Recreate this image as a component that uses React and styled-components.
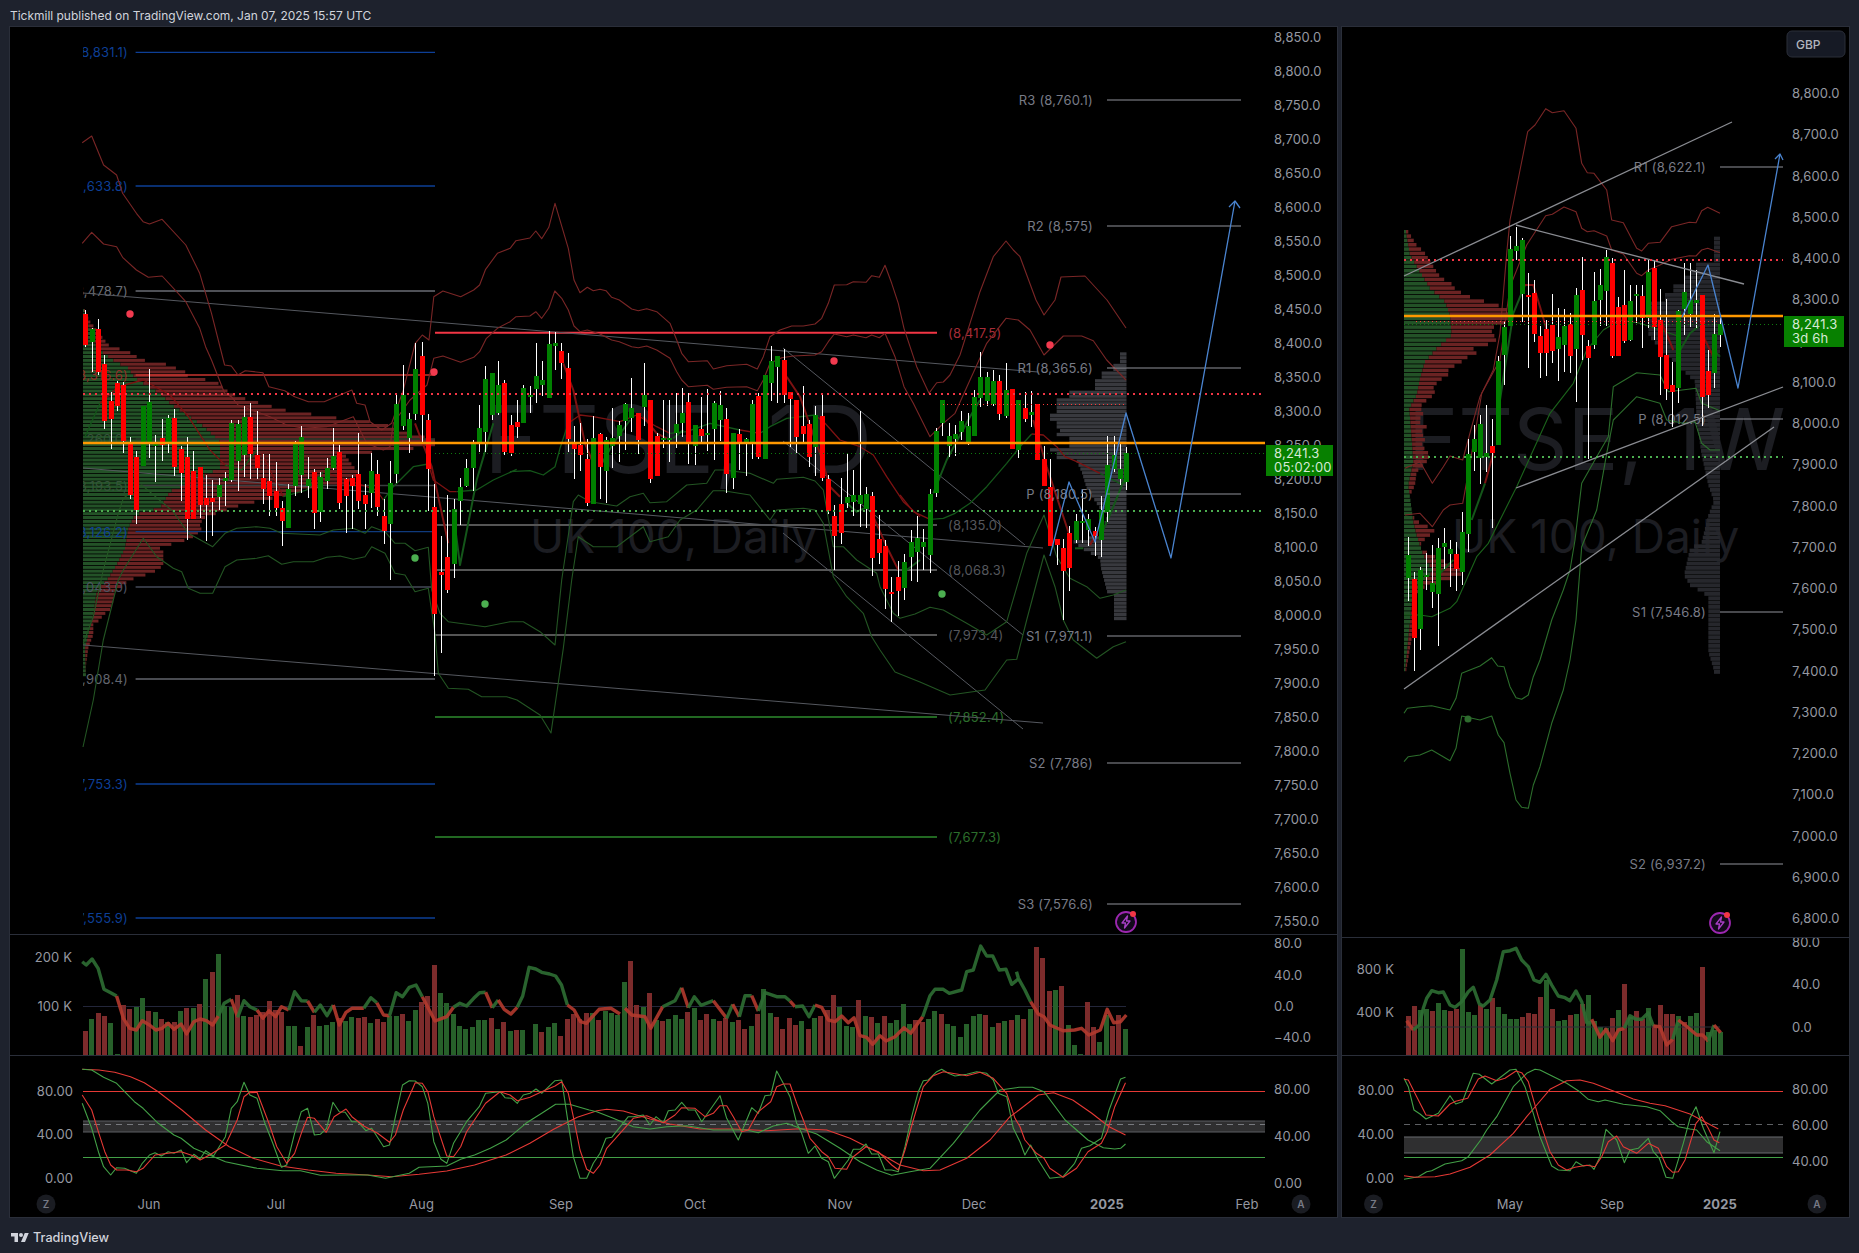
import React from 'react';
import styled, { createGlobalStyle } from 'styled-components';

const GlobalStyle = createGlobalStyle`
  html, body { margin: 0; padding: 0; background: #1e222d; }
  body { font-family: Inter, "Liberation Sans", sans-serif; }
`;

const Page = styled.div`
  width: 1859px;
  height: 1253px;
  display: flex;
  flex-direction: column;
  background: #1e222d;
  overflow: hidden;
`;
const Header = styled.div`
  height: 27px;
  display: flex;
  align-items: center;
  padding: 4px 10px 0;
  box-sizing: border-box;
  font-size: 12px;
  letter-spacing: -0.02px;
  color: #d1d4dc;
`;
const Charts = styled.div`
  height: 1190px;
  display: flex;
  gap: 5px;
  padding: 0 10px;
`;
const Panel = styled.div`
  width: ${p => p.$w}px;
  display: flex;
  flex-direction: column;
  background: #000;
  outline: 1px solid #2a2e39;
`;
const Pane = styled.div`
  height: ${p => p.$h}px;
  border-bottom: ${p => (p.$last ? 'none' : '1px solid #2a2e39')};
  box-sizing: border-box;
  overflow: hidden;
`;
const ChartSvg = styled.svg`
  display: block;
  font-family: Inter, "Liberation Sans", sans-serif;
`;
const Footer = styled.div`
  flex: 1;
  display: flex;
  align-items: center;
  gap: 3px;
  padding: 4px 10px 0;
  color: #d1d4dc;
  font-size: 12.7px;
  font-weight: 500;
`;

const Curve = styled.polyline`
  fill: none;
  stroke: ${p => p.$c};
  stroke-width: ${p => p.$w || 1};
  stroke-linejoin: round;
  opacity: ${p => p.$o || 1};
`;
const Rule = styled.line`
  stroke: ${p => p.$c};
  stroke-width: ${p => p.$w || 1};
  stroke-dasharray: ${p => p.$dash || 'none'};
`;
const Bar = styled.rect`
  fill: ${p => p.$c};
`;
const CrispBar = styled(Bar)`
  shape-rendering: crispEdges;
`;
const Dot = styled.circle`
  fill: ${p => p.$c};
`;
const AxisText = styled.text`
  fill: #9598a1;
  font-size: 13px;
  letter-spacing: 0.1px;
  dominant-baseline: central;
  text-anchor: ${p => p.$anchor || 'start'};
  font-weight: ${p => p.$bold ? 700 : 400};
`;
const LevelText = styled.text`
  fill: ${p => p.$c || '#787b86'};
  font-size: 13px;
  letter-spacing: 0.2px;
  dominant-baseline: central;
  text-anchor: ${p => p.$anchor || 'end'};
`;
const Watermark = styled.text`
  fill: #1c1d22;
  font-size: ${p => p.$size}px;
`;
const TagText = styled.text`
  fill: #d6ead6;
  font-size: 13px;
  letter-spacing: 0.2px;
  dominant-baseline: central;
`;
const BadgeText = styled.text`
  fill: #787b86;
  font-size: 10px;
  font-weight: 600;
  text-anchor: middle;
  dominant-baseline: central;
`;
const CurrencyText = styled.text`
  fill: #b2b5be;
  font-size: 12px;
  font-weight: 500;
  dominant-baseline: central;
`;

// reading windows of the chart: [left, top, scale x, scale y]
const R = [0, 0, 1, 1];
const Z1 = [0, 0, 2.529, 3];
const Z2 = [900, 300, 3, 3];
const Z3 = [1340, 0, 3, 3];
const Z4 = [0, 920, 2.529, 3];
const Z5 = [1000, 880, 2.613, 3];
const Z6 = [1400, 420, 3, 3];
const Z7 = [60, 280, 3, 3];
const Z8 = [510, 320, 3, 3];
const Z9 = [1400, 220, 3, 3];
const Z10 = [500, 930, 3, 3];
const Z11 = [1390, 930, 3, 3];
const Z12 = [500, 190, 3, 3];

const toPts = (sec, str) =>
  str.trim().split(/\s+/).map(s => {
    const [x, y] = s.split(',').map(Number);
    return `${(sec[0] + x / sec[2]).toFixed(1)},${(sec[1] + y / sec[3]).toFixed(1)}`;
  }).join(' ');
const join = parts => parts.map(([sec, str]) => toPts(sec, str)).join(' ');

const parseCandles = (sec, str) =>
  str.trim().split(';').filter(Boolean).map(row => {
    const [x, bt, bb, wt, wb, c] = row.trim().split(' ');
    return {
      x: sec[0] + x / sec[2],
      top: sec[1] + bt / sec[3],
      bottom: sec[1] + bb / sec[3],
      high: sec[1] + wt / sec[3],
      low: sec[1] + wb / sec[3],
      red: c === 'r',
    };
  });

const leftCandles = [
  ...parseCandles(Z7, `76 102 195 90 200 r;97 148 186 143 275 g;115 148 275 118 285 r;133 252 423 225 447 r;154 363 417 337 507 r;172 310 378 303 393 r;190 315 483 305 520 r;211 490 645 472 657 r;229 531 690 513 732 r;250 377 557 377 557 g;268 366 493 268 533 g;286 492 497 465 605 g;307 474 495 418 542 r;325 413 490 405 520 g;343 413 561 388 588 r;364 507 579 498 662 r;382 531 717 472 780 r;400 573 717 513 717 r;421 561 675 561 713 r;439 654 675 585 782 r;457 654 666 600 768 r;478 616 651 595 690 g;496 595 603 575 678 g;514 430 600 420 605 g;535 433 543 420 633 g;553 412 525 378 590 g;571 411 523 370 597 r;592 525 564 393 598 r;610 595 627 522 672 r;628 603 648 522 708 r;649 633 684 546 708 r;667 684 723 663 797 r;685 627 744 612 744 g;706 486 618 483 648 g;724 471 585 438 640 g;745 597 618 531 654 g;763 576 699 566 747 r;781 591 696 576 726 g;802 564 603 534 628 g;820 528 564 444 570 g;838 516 669 495 687 r;859 598 648 594 759 r;877 594 618 585 747 r;895 582 663 459 688 r;916 645 672 612 747 r;934 573 639 519 684 g;952 582 681 540 708 r;973 708 753 657 792 r;991 609 732 543 900 g;1009 372 582 342 610 g;1030 345 438 255 450 g;1048 417 474 400 520 g;1066 267 402 189 420 g;1087 228 405 186 492 r;1105 420 567 402 692 r;1123 681 1001 612 1187 r;1144 876 885 768 1118 r;1162 831 930 645 939 r;1183 687 852 657 894 g;1201 621 663 594 735 g;1219 564 618 537 620 g;1240 489 564 480 633 g;1258 444 492 376 516 g;1276 297 456 258 516 g;1297 279 405 279 420 g;1315 315 399 243 405 g;1333 309 516 300 525 r;1354 435 519 404 528 r`),
  ...parseCandles(Z8, `22 306 320 240 355 r;41 205 308 195 310 g;60 225 231 197 280 g;79 168 206 70 248 g;98 180 195 123 228 g;117 72 234 33 234 g;136 69 77 36 150 g;155 93 129 69 177 r;175 144 357 99 396 r;193 366 387 318 476 r;212 375 405 309 453 r;232 417 549 357 558 r;250 354 552 288 552 g;271 342 441 339 537 r;289 360 453 351 549 g;307 354 378 264 444 g;328 315 348 303 426 g;346 252 303 249 390 g;364 264 294 174 336 g;385 279 360 279 402 r;403 225 261 129 318 g;421 240 477 240 489 r;442 348 468 339 468 r;460 355 358 240 384 g;478 355 360 240 426 g;499 312 339 220 384 g;517 279 309 204 351 g;535 246 369 219 432 r;556 315 378 315 435 g;574 327 348 231 372 r;592 340 342 207 393 g;613 249 327 243 421 g;631 255 300 213 363 g;649 297 462 264 519 r;670 339 474 339 507 g;688 342 369 327 450 r;709 358 366 354 468 g;727 252 366 240 417 g;745 228 411 219 417 r;766 165 417 165 417 g;784 123 189 78 243 g;802 108 141 108 250 g;823 120 225 87 250 r;841 216 237 216 380 r;860 240 351 240 399 r;880 318 342 198 366 r;898 312 411 300 441 r;916 285 381 258 468 g;937 288 474 225 483 r;955 477 573 465 582 r;973 588 648 555 750 r;994 552 639 474 672 r;1012 531 549 402 564 g;1030 525 546 450 588 g;1051 525 552 273 621 g;1069 522 567 501 624 g;1087 528 714 516 768 r;1108 657 699 585 732 r;1126 678 807 660 867 r;1144 816 819 771 906 r;1165 771 813 723 888 r;1183 726 804 702 840 g;1204 666 711 630 783 g;1222 654 696 588 786 g`),
  ...parseCandles(Z2, `70 726 741 687 810 g;91 582 765 567 819 g;109 393 579 385 590 g;127 300 369 300 408 g;148 408 438 369 470 g;166 402 417 375 467 g;184 364 396 333 420 g;205 378 429 339 435 g;223 291 408 270 408 g;241 232 294 156 320 g;262 232 303 216 318 g;280 243 312 210 318 g;298 243 342 226 360 r;319 270 348 189 354 g;337 267 447 267 447 r;355 300 450 300 474 g;376 324 357 276 366 r;394 336 345 273 381 g;412 312 480 312 480 r;433 477 558 438 558 r;451 561 738 477 738 r;472 717 735 717 795 r;490 744 813 717 960 r;508 699 804 678 873 r;529 663 720 642 729 g;547 663 669 570 729 g;565 657 690 642 738 g;586 693 708 681 768 r;604 630 720 588 771 g;622 495 636 408 666 g;643 465 507 408 516 g;661 507 537 432 555 g;679 459 546 441 570 g`),
];

const rightCandles = parseCandles(Z9, `25 1005 1074 950 1143 g;44 1077 1254 1056 1353 r;62 1050 1227 1041 1290 g;80 1066 1069 1000 1110 g;98 1089 1116 975 1164 g;116 984 1122 954 1278 g;134 969 981 924 1047 g;152 987 1002 960 1101 g;170 1002 1047 966 1113 r;188 936 1056 876 1095 g;206 702 942 657 996 g;224 657 696 615 753 g;242 612 714 585 792 g;260 699 711 555 755 g;278 678 699 597 924 r;296 423 675 408 675 g;314 321 405 303 495 g;332 87 318 48 318 g;350 78 93 21 120 g;368 60 222 54 306 g;386 225 230 160 444 r;404 219 342 180 366 r;422 348 399 318 474 r;440 327 399 300 468 r;458 315 393 222 429 r;476 351 387 264 483 g;494 318 375 267 456 g;512 312 408 279 459 r;530 225 387 204 546 g;548 210 345 111 420 r;566 378 414 360 717 r;584 243 375 156 387 g;602 195 240 147 318 g;620 111 213 90 318 g;638 129 408 114 414 r;656 261 408 231 408 r;674 255 363 150 369 r;692 243 360 195 363 g;710 222 225 195 310 g;728 228 294 195 384 r;746 156 294 120 324 g;764 144 321 123 360 r;782 300 411 207 526 r;800 405 507 237 540 r;818 495 516 426 620 r;836 273 504 270 549 g;854 216 267 129 345 g;872 240 282 129 320 g;890 240 249 150 325 g;908 225 531 225 618 r;926 453 525 390 564 r;944 342 459 282 504 g;960 312 345 294 381 g`);

const BAND_R = '#7a2626';
const leftBands = [
  { c: BAND_R, parts: [[Z1, '208,428 232,408 262,495 295,525 310,580 345,640 362,665 378,672 410,658 470,735 505,820 535,940 568,1095 585,1098 602,1125 620,1112 665,1118 680,1160 720,1172 745,1190 780,1205 820,1205 860,1185 890,1170'], [Z7, '890,370 915,375 930,425 965,450 995,430'], [Z1, '1020,1170 1050,1030 1068,1005 1085,1020 1097,890 1120,873 1165,890 1198,870 1213,855 1228,808 1258,760 1290,745 1305,722 1340,714 1355,693 1370,716 1388,682'], [Z12, '165,40 205,175 222,270 240,308 262,292 280,302 300,298 318,302 335,322 358,330 395,357 415,362 440,356 470,365 510,400 530,450 545,490 565,515 622,512 640,537 680,527 740,523 772,537 790,500 810,440 840,420 875,408 910,408 945,402 965,385 985,340 1003,285 1040,284 1060,275 1098,277 1115,257 1138,262 1155,226 1175,280 1195,340 1212,415 1250,530 1287,610 1310,578 1330,576 1350,555 1380,495 1440,305 1480,200 1518,153 1540,180 1560,200'], [R, '1036,300 1044,315 1055,300 1061,277 1085,276 1107,300 1126,328']] },
  { c: BAND_R, parts: [[Z1, '208,730 232,697 262,732 295,740 310,772 345,810 375,832 410,828 470,905 505,985 520,1040 535,1080 568,1180 585,1190 602,1215'], [Z7, '630,410 680,435 730,445 800,440 880,410 920,490 970,510 990,500 1000,430'], [R, '410,400 427,385'], [Z1, '1097,1075 1120,1068 1165,1087 1198,1072 1213,1055 1230,1015 1258,985 1290,965 1305,950 1340,948 1355,935 1370,955 1388,925 1403,873'], [Z12, '185,325 205,360 222,408 240,425 262,420 300,432 335,450 358,455 395,470 415,473 440,468 470,480 510,505 530,545 545,570 565,590 622,586 640,598 680,592 740,590 772,602 790,570 810,520 845,503 880,498 945,495 965,485 985,455 1003,432 1040,440 1060,435 1098,443 1115,435 1138,443 1155,430 1185,500 1212,590 1240,640'], [Z2, '90,410 130,370 165,340 210,240 260,130 318,55 355,60 390,90 432,165 490,108 545,108 580,122 620,180 678,240']] },
  { c: '#235523', parts: [[R, '83,747'], [Z7, '100,1260 130,1080 175,900 190,870 250,775 290,830 340,865 365,875 385,925 420,940 458,940 495,860 530,840 590,835 625,827 665,853 700,845 760,845 800,832 840,828 880,838 915,830 935,800 975,820 1005,880 1035,885 1065,935 1105,925 1125,1060 1135,1180 1165,1225 1225,1228 1265,1250 1340,1250'], [R, '517,700 540,715 551,733'], [Z8, '160,985 185,780 205,650 250,680 320,680 360,650 400,620 420,665 475,650 510,600 560,570 610,512 640,512 720,525 780,600 800,570 880,565 915,570 940,610 970,770 1010,830 1060,880 1085,950 1110,990'], [R, '895,672 920,682 950,695 985,690'], [Z2, '320,1080 350,1078 380,960 432,765 465,860 490,960 520,1020 590,1075 640,1040 678,1025']] },
  { c: '#235523', parts: [[Z7, '70,1090 100,1010 130,870 175,700 190,655 245,615 340,695 385,760 458,800 495,760 530,745 590,740 630,745 665,760 780,765 820,750 880,745 915,760 935,740 975,755 1005,790 1035,790 1065,812 1105,802 1115,930 1140,1000 1165,1025 1275,1040 1350,1025'], [Z8, '0,905 40,905 90,935 135,975 155,780 190,545 205,525 240,545 320,558 360,530 400,520 420,548 470,545 530,495 590,490 615,450 640,450 720,460 790,490 800,478 880,472 915,483 940,510 970,680 1000,680 1040,720 1100,760 1110,800 1150,880'], [Z2, '0,955 45,942 90,922 130,930 200,970 260,1005 320,965 380,760 432,645 470,770 510,835 560,860 600,895 640,885 678,870']] },
];

const DR = '#7d1212';
const DG = '#14561a';
const leftMid = [
  [DG, Z7, '75,470 120,370'], [DR, Z7, '120,370 175,320 250,300 330,345 385,410 450,510 495,555'], [DG, Z7, '495,555 545,570 590,510'],
  [DR, Z7, '605,520 640,590 670,650'], [DG, Z7, '670,650 740,630 790,575'], [DR, Z7, '790,575 860,600 950,630 970,660'],
  [DG, Z7, '970,660 1000,620 1060,560 1105,552'], [DR, Z7, '1105,552 1120,600 1170,635 1190,635'], [DG, Z7, '1190,635 1250,630 1300,600 1370,568'],
  [DG, Z8, '0,455 60,452 100,465 135,440 150,385 175,310'], [DR, Z8, '175,310 210,285 250,290 330,305 380,285 440,320 480,340'], [DG, Z8, '480,340 530,335 600,310 690,330'],
  [DR, Z8, '690,330 750,340'], [DG, Z8, '750,340 780,320 830,295 915,285'], [DR, Z8, '915,285 945,310 990,360 1050,380 1090,405 1130,470 1180,545 1230,590'],
  [DR, Z2, '0,585 40,635 90,658'], [DG, Z2, '90,658 130,655 165,640 210,610 260,560 320,490 360,440 395,402'], [DR, Z2, '395,402 430,405 470,440 495,470 530,485 600,520'], [DG, Z2, '600,520 660,550 678,548'],
];
const leftFast = [
  [DR, Z7, '1065,430 1115,560 1165,790'], [DG, Z7, '1180,700 1200,855 1250,600 1300,430'], [DR, Z8, '160,130 190,210 225,370 250,430'], [DG, Z8, '270,440 310,370 360,300'],
  [DR, Z8, '400,290 440,340 470,355'], [DG, Z8, '490,355 520,330'], [DR, Z8, '830,170 870,230 905,330 930,400 960,500 990,530'], [DG, Z8, '1010,550 1040,575 1075,560'],
  [DR, Z8, '1090,590 1130,680 1165,750'], [DG, Z8, '1190,750 1230,720'], [DG, Z2, '100,580 140,480 210,350 240,300'], [DR, Z2, '400,360 440,500 480,620 510,710'],
  [DG, Z2, '525,745 550,745'], [DR, Z2, '570,735 590,700'], [DG, Z2, '610,690 640,620 680,520'],
];

const rightBands = [
  { c: BAND_R, parts: [[Z9, '15,745 60,725 97,790 130,740 150,708 188,720 215,620 240,530 280,450 300,340 320,100 330,0'], [Z3, '563,395 585,375 617,326 637,338 672,332 708,385 725,490 742,518 762,520 800,570 815,660 850,668 890,745 905,753 925,730 960,727 995,680 1048,667 1068,668 1085,632 1103,622 1140,640']] },
  { c: BAND_R, parts: [[Z9, '15,885 60,880 97,920 130,870 150,855 188,850 210,730 245,520 300,420 330,200 380,75'], [Z3, '617,647 637,643 672,621 708,635 725,685 742,695 762,692 800,708 815,750 850,762 890,820 905,827 925,810 960,795 995,778 1048,767 1068,768 1085,750 1103,745 1140,758']] },
  { c: '#2c6e2c', parts: [[Z6, '12,1025 25,1010 60,1005 95,990 150,1022 168,985 185,888 240,900 275,888 295,945 312,968 330,1060 348,1140 365,1162 385,1165 400,1095 420,1040 455,910 490,810 510,720 528,600 545,380 590,270 620,100 640,0'], [Z9, '660,580 710,530 780,550 800,600 850,610 885,605 905,670 930,690 960,690']] },
  { c: '#2c6e2c', parts: [[Z6, '12,880 22,865 60,860 95,857 150,870 168,835 185,760 240,738 275,713 293,738 312,740 330,800 348,833 365,838 385,825 400,770 420,720 455,600 490,510 510,450 525,360 545,190 590,110 625,50'], [Z9, '640,500 710,458 780,465 805,515 888,505 905,550 960,572']] },
  { c: '#1b631b', parts: [[Z9, '12,1185 60,1185 95,1190 150,1165 170,1145 230,1010 265,970 350,800 400,690 450,580 520,490 560,390 610,330 660,300 720,310 840,350']] },
];
const rightFast = [
  [DG, Z9, '120,1060 160,1020'], [DG, Z9, '215,900 255,790'], [DR, Z9, '255,790 280,700'], [DG, Z9, '300,540 340,280 375,195'], [DR, Z9, '375,195 400,195 420,260 440,330'],
  [DG, Z9, '835,400 870,340 895,320'], [DR, Z9, '905,340 940,410'], [DR, Z9, '782,300 820,390'], [DG, Z9, '940,390 960,410'],
];

const lerp = (table, v) => {
  if (v <= table[0][0]) return table[0][1];
  for (let i = 1; i < table.length; i++) {
    if (v <= table[i][0]) {
      const [a, b] = [table[i - 1], table[i]];
      return a[1] + (b[1] - a[1]) * (v - a[0]) / (b[0] - a[0]);
    }
  }
  return table[table.length - 1][1];
};

const rowsFrom = (from, to, step) => {
  const out = [];
  for (let v = from; v < to; v += step) out.push(v);
  return out;
};

const VP_L_RED = [[90,75],[120,90],[190,145],[215,215],[235,245],[245,310],[270,375],[285,385],[300,470],[320,490],[335,512],[355,565],[370,620],[385,670],[395,740],[405,795],[415,880],[425,970],[440,1000],[460,1070],[475,1125],[495,1125],[520,855],[555,880],[575,900],[600,880],[630,710],[650,640],[670,545],[690,485],[710,430],[730,420],[745,425],[765,400],[785,355],[795,295],[810,310],[850,310],[865,295],[885,245],[895,210],[930,165],[960,160],[985,150],[1000,130],[1015,120],[1030,100],[1060,100],[1080,92],[1100,85],[1150,78]];
const VP_L_GREEN = [[90,72],[200,110],[240,165],[260,205],[290,225],[340,305],[370,335],[430,425],[480,480],[560,480],[630,330],[680,300],[700,225],[740,205],[800,195],[850,170],[890,145],[930,110],[1000,100],[1100,75],[1185,78]];
const VP_R_RED = [[30,25],[70,50],[90,72],[150,110],[170,125],[180,150],[200,165],[220,195],[235,240],[245,280],[260,320],[280,325],[300,322],[320,272],[340,280],[350,295],[365,275],[380,220],[395,230],[405,205],[420,185],[435,160],[450,140],[460,145],[475,120],[495,100],[510,105],[525,95],[540,75],[555,60],[575,70],[600,55],[610,85],[630,65],[655,75],[670,65],[700,90],[720,80],[750,50],[790,45],[810,35],[830,20],[870,25],[900,55],[925,105],[945,85],[960,65],[980,60],[1000,95],[1050,200],[1080,130],[1100,60],[1150,40],[1250,35],[1350,18]];
const VP_R_GREEN = [[30,18],[100,30],[150,60],[200,90],[240,135],[280,150],[340,155],[380,110],[420,75],[470,60],[520,50],[560,28],[650,35],[720,40],[790,25],[900,40],[940,50],[1000,70],[1050,100],[1100,40],[1350,15]];
const VPVR_L = [[157,660],[188,660],[190,640],[206,640],[208,605],[226,605],[228,585],[268,585],[272,508],[293,508],[295,470],[338,470],[340,450],[356,450],[358,470],[376,470],[378,490],[386,490],[388,470],[403,470],[405,508],[433,508],[436,450],[448,450],[450,470],[473,470],[475,528],[510,545],[560,560],[620,600],[640,622],[700,600],[720,520],[740,545],[770,600],[800,603],[873,622],[878,642],[962,642]];
const VPVR_R = [[50,942],[123,942],[125,888],[153,888],[155,852],[183,852],[185,820],[208,820],[210,795],[238,795],[240,745],[340,745],[380,780],[480,885],[600,890],[700,905],[790,925],[838,942],[880,925],[960,905],[980,870],[1060,852],[1090,870],[1110,905],[1125,925],[1290,925],[1345,942],[1355,942]];

const labelPrice = p => `${p.toLocaleString('en-US')}.0`;
const leftPrices = rowsFrom(0, 27, 1).map(i => 8850 - i * 50);
const rightPrices = rowsFrom(0, 21, 1).map(i => 8800 - i * 100);
const leftPriceY = p => 615 - (p - 8000) * 0.68;
const rightPriceY = p => 423 - (p - 8000) * 0.4125;

const fibLines = [
  { y: 52.3, c: '#0d3f96', t: '(8,831.1)' },
  { y: 186, c: '#0d3f96', t: '(8,633.8)' },
  { y: 291, c: '#6a6d75', t: '(8,478.7)' },
  { y: 375, c: '#c9352f', t: '(8,316.6)', lc: '#8f2d28' },
  { y: 439, c: '#2c3a2c', t: '(8,260.0)', lc: '#35543a' },
  { y: 485.5, c: '#3b3d3f', t: '(8,193.5)', lc: '#35543a' },
  { y: 531.7, c: '#0f3a7c', t: '(8,126.2)', lc: '#0d3f96' },
  { y: 587, c: '#444a58', t: '(8,043.0)', lc: '#4d5363' },
  { y: 679, c: '#62656d', t: '(7,908.4)' },
  { y: 784, c: '#0d3f96', t: '(7,753.3)' },
  { y: 918, c: '#0d3f96', t: '(7,555.9)' },
];
const midLines = [
  { y: 332.7, c: '#f23645', w: 2, t: '(8,417.5)', lc: '#a82c38' },
  { y: 525, c: '#555', w: 2, t: '(8,135.0)', lc: '#55575c' },
  { y: 570, c: '#555', w: 2, t: '(8,068.3)', lc: '#55575c' },
  { y: 635, c: '#555', w: 2, t: '(7,973.4)', lc: '#55575c' },
  { y: 717, c: '#2e8b2e', w: 1.5, t: '(7,852.4)', lc: '#2c6e2c' },
  { y: 837, c: '#2e8b2e', w: 1.5, t: '(7,677.3)', lc: '#2c6e2c' },
];
const leftPivots = [
  { y: 100, t: 'R3 (8,760.1)' }, { y: 226, t: 'R2 (8,575)' }, { y: 368, t: 'R1 (8,365.6)' }, { y: 494, t: 'P (8,180.5)' },
  { y: 636, t: 'S1 (7,971.1)' }, { y: 763, t: 'S2 (7,786)' }, { y: 904, t: 'S3 (7,576.6)' },
];
const rightPivots = [
  { y: 167, t: 'R1 (8,622.1)' }, { y: 419, t: 'P (8,012.5)' }, { y: 612, t: 'S1 (7,546.8)' }, { y: 864, t: 'S2 (6,937.2)' },
];

const VOL_G = '#27602a';
const VOL_R = '#7c2b2b';
const volRows = (bottom, sy, str) => str.trim().split(/\s+/).map(s => {
  const c = s[0];
  return { h: (bottom - Number(s.slice(1))) / sy, c: c === 'r' ? VOL_R : VOL_G };
});
const leftVol = [
  ...volRows(405, 3, 'r333 g297 r280 r288 g308 g403 r255 r267 g260 g235 r273 g276 r297 g305 r306 g273 r264 g264 r252 g177 r156 g102 g258 g262 r225 g288 r290 r285 r275 r243 r270 r275 g318 g318 r378 g322 r285 g318 g315 g306 r293 g303 g291 r293 r291 g308 r297 r306 g288 g287 r282 g303 g270 r246 r228 r135 g219 g250 g282 g318 g327 g321 g300 g300 r294 g327'),
  ...volRows(375, 3, 'r276 g303 r300 g300 g372 g282 r306 g291 g279 r318 r267 r252 r267 r249 g249 r270 g243 g249 g255 g156 r93 r225 g231 r189 g270 r273 g267 g255 g267 r246 g234 r270 r252 g267 r273 r264 g276 r270 r297 g288 r252 g177 g249 r261 r297 r264 r285 g273 r297 g264 r258 r240 r195 g231 g288 g291 r210 g258 r261 g279 r258 g279 g270 g222 g282 r270 r276 g267 g243 r252 g282 g288 g321 g282 g258 g252 r255 g291 r279 g273 r270 g255'),
  ...volRows(525, 3, 'r417 g387 r201 r234 r333 g330 r318 g435 g495 g522 r366 r441 g486 g405 r438 r405 g447'),
];
const rightVol = volRows(375, 3, 'r258 r228 g240 g237 r243 g219 g240 r243 r237 g57 g246 g255 r225 g237 r204 g231 g252 g267 g267 r261 r249 r252 r201 g150 r237 g273 g270 r255 g252 r222 g195 g273 g291 g294 r264 g240 r162 g261 r243 r267 g234 r285 r225 r252 r252 g258 r276 g258 g249 r111 g306 g300 g306');

const OG = '#2e6e33';
const OR = '#b23a2e';
const leftOsc = [
  [OG, Z4, '208,125 218,135 233,117 248,145 263,208 280,218 295,228'], [OR, Z4, '295,228 312,295 328,325 345,330 360,302 378,315 394,330 410,325 425,310 440,328 458,312 472,342 490,305 506,297 522,302 538,315 552,288'],
  [OG, Z4, '552,288 567,250 585,238'], [OR, Z4, '585,238 601,292'], [OG, Z4, '601,292 617,242 632,260 650,270'], [OR, Z4, '650,270 665,295 680,272 697,290 712,260 730,270'],
  [OG, Z4, '730,270 745,215 762,242 778,243'], [OR, Z4, '778,243 795,277'], [OG, Z4, '795,277 810,255 827,287 843,255'], [OR, Z4, '843,255 858,315 875,277 890,265 920,265'],
  [OG, Z4, '920,265 938,233 953,248'], [OR, Z4, '953,248 970,285 985,287'], [OG, Z4, '985,287 1002,218 1018,230 1035,202 1052,195 1068,230'], [OR, Z4, '1068,230 1100,303 1130,290 1147,262'],
  [OG, Z4, '1147,262 1163,250 1180,258 1198,235 1213,218 1228,217'], [OR, Z4, '1228,217 1245,263'], [OG, Z4, '1245,263 1260,240'], [OR, Z4, '1260,240 1275,268 1292,282 1308,262'],
  [OG, Z4, '1308,262 1322,228 1338,142 1355,147 1370,157 1390,162 1405,168 1420,195 1435,255'], [OR, Z4, '1435,255 1452,270 1468,305 1483,310 1515,268 1545,265 1568,282'],
  [OR, Z10, '375,235 395,255 435,260 452,295 488,230'], [OG, Z10, '488,230 525,212 545,173'], [OR, Z10, '545,173 565,233'], [OG, Z10, '565,233 583,200 603,226 640,212'],
  [OR, Z10, '640,212 680,265'], [OG, Z10, '680,265 698,223'], [OR, Z10, '698,223 718,260'], [OG, Z10, '718,260 735,197 755,197'], [OR, Z10, '755,197 775,243'],
  [OG, Z10, '775,243 795,188 830,200 855,200 870,213'], [OR, Z10, '870,213 885,230'], [OG, Z10, '885,230 908,228 927,260 945,225'],
  [OR, Z10, '945,225 965,232 985,270 1005,275 1025,258 1045,278 1062,263 1080,317 1100,322 1118,343 1140,317 1158,333 1185,320 1212,293 1232,310 1268,260'],
  [OG, Z10, '1268,260 1290,197 1305,178 1330,178 1348,190 1385,180 1400,125 1420,120 1442,48 1460,78 1478,78 1498,120 1518,118 1535,163 1555,147'],
  [OG, Z5, '43,275 48,295 65,330 80,365'], [OR, Z5, '80,365 100,402 115,410 130,435 165,452 195,450 213,445 232,465 262,450 280,388 297,428 315,425 330,405'],
];
const rightOsc = [
  [OR, Z11, '50,272 70,300'], [OG, Z11, '70,300 88,285 100,235 110,205 125,182 145,188 160,186 180,225 195,232 215,215 235,185 250,172 268,222 280,228 300,210 320,150 340,65 360,62 378,55 395,90 415,110 432,150 450,157 468,133 485,165 505,198 525,203 540,212 558,183 575,215 590,278 605,278'],
  [OR, Z11, '605,268 630,322 648,298 668,332 685,300 703,295'], [OG, Z11, '703,295 720,257 738,268 755,268 775,248 790,288'], [OR, Z11, '790,288 810,290 830,345 848,328'],
  [OG, Z11, '848,328 865,270'], [OR, Z11, '865,270 885,285 920,315 938,315 955,333'], [OG, Z11, '955,333 972,285'], [OR, Z11, '972,285 992,308'],
];

const STOCH_G = '#43a047';
const STOCH_R = '#e53935';
const leftStoch = [
  { c: STOCH_R, parts: [[Z4, '208,448 250,450 290,457 330,470 365,488 400,515 460,570 520,630 580,680 640,715 710,738 780,750 850,760 930,765 990,770 1060,763 1130,753 1200,735 1280,705 1340,670 1400,628 1460,592 1510,572'], [Z10, '320,538 370,543 450,567 510,582 600,597 700,597 800,602 900,596 980,600 1050,625 1130,665 1200,705 1270,722 1320,720 1400,685 1470,630 1530,560'], [Z5, '50,690 100,645 140,638 190,660 240,700 285,740 328,765']] },
  { c: STOCH_G, parts: [[Z4, '208,448 232,450 262,472 295,490 340,545 362,565 400,610 440,645 458,655 490,685 530,705 570,725 650,745 715,752 760,752 810,766 880,765 930,765 975,775 1035,760 1060,742 1130,738 1165,718 1200,705 1240,685 1280,660 1330,610 1370,580 1405,553 1440,553 1490,570'], [Z10, '290,545 340,565 400,590 450,597 500,590 560,587 640,600 740,600 775,608 820,588 860,580 900,595 950,612 1020,655 1080,695 1130,720 1175,736 1230,725 1290,715 1360,640 1440,540 1500,480'], [Z5, '50,622 85,622 115,635 170,720 230,780 270,803 300,807 315,805 328,792']] },
  { c: STOCH_G, parts: [[Z4, '208,550 232,625 250,700 262,740 280,765 295,743 315,745 345,760 360,730 378,705 392,698 408,708 425,695 440,700 458,690 472,728 490,703 506,716 520,692 540,708 570,650 585,565 600,545 617,487 632,525 650,535 670,610 690,670 712,742 725,735 745,640 762,575 778,565 795,645 810,643 826,625 842,547 858,575 873,577 890,605 905,605 925,632 940,625 970,680 985,675 1000,590 1018,495 1035,482 1050,483 1068,500 1082,550 1097,665 1115,718 1130,730 1147,670 1180,605 1212,560 1228,520'], [Z10, '0,485 15,503 35,505 52,520 70,495 90,490 108,477 125,490 165,452 185,450 200,550 220,680 240,745 260,745 280,700 300,670 318,625 335,622 385,560 400,560 430,555 450,585 468,560 490,578 505,542 525,540 545,517 565,540 585,540 605,575 660,497 680,565 715,630 755,533 775,550 795,497 812,495 830,423 850,460 870,500 890,580 905,610 925,670 945,648 965,685 985,695 1003,745 1045,690 1060,658 1080,658 1098,642 1115,672 1135,672 1155,720 1175,720 1195,725 1215,650 1235,560 1255,485 1270,452 1285,450 1310,425 1325,418 1345,430 1365,438 1400,433 1430,425 1460,430 1480,450 1495,490 1520,500 1540,595 1560,635'], [Z5, '65,825 80,795 100,840 130,895 165,890 195,850 213,805 235,797 265,775 285,690 315,597 328,592']] },
  { c: STOCH_R, parts: [[Z4, '208,525 232,570 250,640 265,695 280,735 295,750 320,750 345,755 362,745 392,705 425,700 458,695 490,708 506,720 530,705 570,675 600,600 617,530 630,518 650,517 680,610 700,680 725,730 745,700 762,640 778,592 795,595 825,637 845,590 875,567 890,590 920,618 955,640 985,667 1000,645 1020,570 1050,488 1068,490 1082,515 1097,590 1130,708 1147,710 1165,680 1180,635 1228,550'], [Z10, '0,485 30,495 52,512 90,502 125,485 165,468 185,455 205,490 220,560 240,660 260,718 280,730 300,705 320,655 360,610 400,565 440,557 490,578 525,555 545,533 585,535 615,560 640,550 660,527 680,527 700,560 725,605 745,600 775,545 812,515 830,470 850,462 870,462 890,520 910,570 930,625 965,665 985,680 1005,715 1040,718 1060,680 1098,650 1135,665 1175,705 1195,720 1215,660 1240,570 1255,520 1270,470 1300,437 1330,425 1370,432 1400,437 1440,427 1480,445 1520,490 1545,565 1560,590'], [Z5, '65,780 95,820 115,835 130,865 165,892 200,865 230,815 265,790 280,755 300,680 328,608']] },
];
const rightStoch = [
  { c: STOCH_G, s: '42,748 85,740 110,725 125,722 165,702 215,692 235,680 272,630 290,600 320,560 370,470 410,430 435,418 450,420 530,460 565,482 595,508 625,515 645,510 700,523 770,530 810,542 845,575 865,590 900,597 920,600 950,635 990,662' },
  { c: STOCH_R, s: '42,737 75,742 135,740 180,732 240,712 300,675 370,610 410,560 440,525 480,478 530,452 570,450 610,460 680,487 730,507 780,520 825,527 900,552 985,597' },
  { c: STOCH_G, s: '42,445 55,470 72,540 90,552 108,567 145,550 180,497 197,522 217,515 250,430 268,433 305,462 360,420 378,418 405,470 430,550 450,620 485,708 505,720 540,722 558,695 580,708 600,705 612,718 630,680 648,598 680,630 703,698 720,660 745,655 775,625 790,665 808,685 828,742 848,745 880,640 900,565 918,530 940,595 972,668 990,605' },
  { c: STOCH_R, s: '42,448 55,450 80,500 108,555 145,558 180,522 197,514 233,505 265,447 285,438 320,452 345,445 378,423 395,428 415,455 445,560 480,665 505,705 530,720 555,712 590,706 615,710 635,680 655,635 680,618 700,650 740,670 775,640 805,655 830,710 848,727 865,725 885,690 918,580 935,560 955,595 972,630 988,638' },
];

function Candles({ list }) {
  return (
    <g>
      {list.map((k, i) => {
        const left = Math.round(k.x - 2.5);
        return (
          <g key={i}>
            <CrispBar $c="#fff" x={left + 2} y={k.high} width={1} height={k.low - k.high} />
            <CrispBar $c={k.red ? '#ff0000' : '#008000'} x={left} y={k.top} width={5} height={Math.max(k.bottom - k.top, 2)} />
          </g>
        );
      })}
    </g>
  );
}

function Segments({ list, w, o }) {
  return list.map(([c, sec, s], i) => <Curve key={i} $c={c} $w={w} $o={o} points={toPts(sec, s)} />);
}

function Bands({ list, w }) {
  return list.map((b, i) => <Curve key={i} $c={b.c} $w={w || 1.1} points={join(b.parts)} />);
}

function SplitProfile({ sec, from, to, step, green, red, startX }) {
  return rowsFrom(from, to, step).map(v => {
    const y = sec[1] + v / 3;
    const gx = sec[0] + lerp(green, v) / 3;
    const rx = sec[0] + lerp(red, v) / 3;
    return (
      <g key={v}>
        <Bar $c="#235227" x={startX} y={y} width={Math.max(gx - startX, 0)} height={step / 3 - 0.8} />
        <Bar $c="#6b2323" x={gx} y={y} width={Math.max(rx - gx, 0)} height={step / 3 - 0.8} />
      </g>
    );
  });
}

function VolumeAtPrice({ sec, table, from, to, step, right, c }) {
  return rowsFrom(from, to, step).map(v => {
    const x = sec[0] + lerp(table, v) / 3;
    return <Bar key={v} $c={c} x={x} y={sec[1] + v / 3} width={right - x} height={step / 3 - 0.5} />;
  });
}

function BoltBadge({ x, y }) {
  return (
    <g transform={`translate(${x} ${y})`}>
      <circle r="10" fill="#12091a" stroke="#9c27b0" strokeWidth="1.8" />
      <path d="M1.5 -6 L-4 1 L-0.5 1 L-1.5 6 L4 -1 L0.5 -1 Z" fill="none" stroke="#a83fc4" strokeWidth="1.3" strokeLinejoin="round" />
      <circle cx="7" cy="-8" r="3" fill="#f23645" />
    </g>
  );
}

function RoundBadge({ x, y, t }) {
  return (
    <g>
      <circle cx={x} cy={y} r="9.5" fill="#1a1c22" />
      <BadgeText x={x} y={y}>{t}</BadgeText>
    </g>
  );
}

function LeftMain() {
  return (
    <ChartSvg width="1327" height="907" viewBox="10 27 1327 907">
      <defs>
        <clipPath id="leftClip"><rect x="83" y="27" width="1254" height="907" /></clipPath>
      </defs>
      <Watermark $size={93} x="484" y="473">FTSE, 1D</Watermark>
      <Watermark $size={46} x="530" y="553">UK 100, Daily</Watermark>
      <SplitProfile sec={Z7} from={87} to={1185} step={11.5} green={VP_L_GREEN} red={VP_L_RED} startX={83} />
      <VolumeAtPrice sec={Z2} table={VPVR_L} from={157} to={962} step={11.5} right={1126.5} c="#38393e" />
      <g clipPath="url(#leftClip)">
        {fibLines.map(l => (
          <g key={l.t}>
            <Rule $c={l.c} $w={1.3} x1="135.6" x2="435" y1={l.y} y2={l.y} />
            <LevelText $c={l.lc || l.c} x="128" y={l.y}>{l.t}</LevelText>
          </g>
        ))}
      </g>
      {midLines.map(l => (
        <g key={l.t}>
          <Rule $c={l.c} $w={l.w} x1="435" x2="937" y1={l.y} y2={l.y} />
          <LevelText $c={l.lc} $anchor="start" x="948" y={l.y}>{l.t}</LevelText>
        </g>
      ))}
      <Rule $c="#55585f" x1="83" y1="293" x2="1038" y2="372" />
      <Rule $c="#55585f" x1="83" y1="468" x2="1043" y2="548" />
      <Rule $c="#55585f" x1="83" y1="645" x2="1043" y2="723" />
      <Rule $c="#55585f" x1="783" y1="348" x2="1025" y2="545" />
      <Rule $c="#55585f" x1="783" y1="441" x2="1023" y2="635" />
      <Rule $c="#55585f" x1="783" y1="533" x2="1023" y2="729" />
      <Bands list={leftBands} />
      <Segments list={leftMid} w={1.3} />
      <Segments list={leftFast} w={2} />
      <Candles list={leftCandles} />
      {leftPivots.map(l => (
        <g key={l.t}>
          <LevelText x="1093" y={l.y}>{l.t}</LevelText>
          <Rule $c="#8f9299" $w={1.2} x1="1107" x2="1241" y1={l.y} y2={l.y} />
        </g>
      ))}
      <Rule $c="#ff3b3b" $w={1} $dash="1 3" x1="943" x2="1126" y1="404.5" y2="404.5" />
      <Rule $c="#f23645" $w={2} $dash="2 4" x1="83" x2="1265" y1="394" y2="394" />
      <Rule $c="#4caf50" $w={2} $dash="2 4" x1="83" x2="1265" y1="511" y2="511" />
      <Rule $c="#0f7a0f" $w={1} $dash="1 3" x1="435" x2="1265" y1="453.5" y2="453.5" />
      <Rule $c="#ff9800" $w={2.4} x1="83" x2="1265" y1="443" y2="443" />
      <Curve $c="#4a84d0" $w={1.3} points="1050,556 1069,482 1095,542 1126,413 1171,558 1235,201" />
      <Curve $c="#4a84d0" $w={1.3} points="1229,207 1235,201 1240,208" />
      <Dot $c="#f23a4f" cx="130" cy="314" r="3.7" />
      <Dot $c="#f23a4f" cx="434" cy="372" r="3.7" />
      <Dot $c="#f23a4f" cx="834" cy="361" r="3.7" />
      <Dot $c="#f23a4f" cx="1050" cy="345" r="3.7" />
      <Dot $c="#4caf50" cx="415" cy="558" r="3.7" />
      <Dot $c="#4caf50" cx="485" cy="604" r="3.7" />
      <Dot $c="#4caf50" cx="942" cy="594" r="3.7" />
      <BoltBadge x={1126} y={922} />
      {leftPrices.map(p => (
        <AxisText key={p} x="1274" y={leftPriceY(p)}>{labelPrice(p)}</AxisText>
      ))}
      <Bar $c="#078000" x="1266" y="445" width="67" height="31" />
      <TagText x="1274" y="453">8,241.3</TagText>
      <TagText x="1274" y="467">05:02:00</TagText>
    </ChartSvg>
  );
}

function LeftVolume() {
  return (
    <ChartSvg width="1327" height="120" viewBox="10 935 1327 120">
      <Rule $c="#23263a" x1="83" x2="1126" y1="1006.5" y2="1006.5" />
      {leftVol.map((b, i) => (
        <CrispBar key={i} $c={b.c} x={Math.round(85.4 + i * 6.34 - 2.5)} y={1055 - b.h} width={5} height={b.h} />
      ))}
      <Segments list={leftOsc} w={3.4} o={0.9} />
      <AxisText $anchor="end" x="72" y="957">200 K</AxisText>
      <AxisText $anchor="end" x="72" y="1006">100 K</AxisText>
      <AxisText x="1274" y="943">80.0</AxisText>
      <AxisText x="1274" y="975">40.0</AxisText>
      <AxisText x="1274" y="1006">0.0</AxisText>
      <AxisText x="1274" y="1037">−40.0</AxisText>
    </ChartSvg>
  );
}

function LeftStoch() {
  return (
    <ChartSvg width="1327" height="161" viewBox="10 1056 1327 161">
      <Bar $c="#2f2f30" x="83" y="1121" width="1182" height="11" />
      <Rule $c="#5d5f63" x1="83" x2="1265" y1="1121" y2="1121" />
      <Rule $c="#5d5f63" x1="83" x2="1265" y1="1132" y2="1132" />
      <Rule $c="#77797e" $dash="6 5" x1="83" x2="1265" y1="1124.5" y2="1124.5" />
      <Rule $c="#e53935" x1="83" x2="1265" y1="1091.5" y2="1091.5" />
      <Rule $c="#43a047" x1="83" x2="1265" y1="1157.5" y2="1157.5" />
      <Bands list={leftStoch} />
      <AxisText $anchor="end" x="73" y="1091">80.00</AxisText>
      <AxisText $anchor="end" x="73" y="1134">40.00</AxisText>
      <AxisText $anchor="end" x="73" y="1178">0.00</AxisText>
      <AxisText x="1274" y="1089">80.00</AxisText>
      <AxisText x="1274" y="1136">40.00</AxisText>
      <AxisText x="1274" y="1183">0.00</AxisText>
      {[['Jun', 149], ['Jul', 276], ['Aug', 421.5], ['Sep', 561], ['Oct', 695], ['Nov', 840], ['Dec', 974], ['Feb', 1247]].map(([t, x]) => (
        <AxisText key={t} $anchor="middle" x={x} y="1204">{t}</AxisText>
      ))}
      <AxisText $anchor="middle" $bold x="1107" y="1204">2025</AxisText>
      <RoundBadge x={46} y={1204} t="Z" />
      <RoundBadge x={1301} y={1204} t="A" />
    </ChartSvg>
  );
}

function RightMain() {
  return (
    <ChartSvg width="507" height="910" viewBox="1342 27 507 910">
      <Watermark $size={85} x="1408" y="470">FTSE, 1W</Watermark>
      <Watermark $size={46} x="1452" y="553">UK 100, Daily</Watermark>
      <SplitProfile sec={Z9} from={30} to={1350} step={13} green={VP_R_GREEN} red={VP_R_RED} startX={1404} />
      <VolumeAtPrice sec={Z9} table={VPVR_R} from={50} to={1355} step={13} right={1720} c="#26272c" />
      {rightPivots.map(l => (
        <g key={l.t}>
          <LevelText x="1706" y={l.y}>{l.t}</LevelText>
          <Rule $c="#8f9299" $w={1.2} x1="1720" x2="1783" y1={l.y} y2={l.y} />
        </g>
      ))}
      <Bands list={rightBands} />
      <Segments list={rightFast} w={2} />
      <Candles list={rightCandles} />
      <Rule $c="#8a8c92" $w={1.3} x1="1404" y1="276" x2="1732" y2="122" />
      <Rule $c="#8a8c92" $w={1.3} x1="1516" y1="225" x2="1744" y2="284" />
      <Rule $c="#8a8c92" $w={1.3} x1="1516" y1="488" x2="1783" y2="387" />
      <Rule $c="#8a8c92" $w={1.3} x1="1404" y1="689" x2="1774" y2="427" />
      <Rule $c="#f23645" $w={2} $dash="2 4" x1="1404" x2="1783" y1="260" y2="260" />
      <Rule $c="#4caf50" $w={2} $dash="2 4" x1="1404" x2="1783" y1="457" y2="457" />
      <Rule $c="#ff3b3b" $dash="1 3" x1="1416" x2="1720" y1="321.5" y2="321.5" />
      <Rule $c="#0f7a0f" $dash="1 3" x1="1404" x2="1783" y1="324.5" y2="324.5" />
      <Rule $c="#ff9800" $w={2.4} x1="1404" x2="1783" y1="316" y2="316" />
      <Curve $c="#4a84d0" $w={1.3} points="1682,317 1708,265 1738,388 1780,154" />
      <Curve $c="#4a84d0" $w={1.3} points="1775,159 1780,154 1783,160" />
      <Dot $c="#2e6b2e" cx="1468" cy="719" r="3.5" />
      <BoltBadge x={1720} y={923} />
      {rightPrices.map(p => (
        <AxisText key={p} x="1792" y={rightPriceY(p)}>{labelPrice(p)}</AxisText>
      ))}
      <Bar $c="#078000" x="1784" y="316" width="60" height="31" />
      <TagText x="1792" y="323.5">8,241.3</TagText>
      <TagText x="1792" y="338">3d 6h</TagText>
      <rect x="1787" y="31" width="58" height="26" rx="5" fill="#161a25" stroke="#2a2e39" />
      <CurrencyText x="1796" y="44">GBP</CurrencyText>
    </ChartSvg>
  );
}

function RightVolume() {
  return (
    <ChartSvg width="507" height="117" viewBox="1342 938 507 117">
      {rightVol.map((b, i) => (
        <CrispBar key={i} $c={b.c} x={Math.round(1408.3 + i * 6 - 2.5)} y={1055 - b.h} width={5} height={b.h} />
      ))}
      <Rule $c="#2a2e39" x1="1404" x2="1720" y1="1027" y2="1027" />
      <Segments list={rightOsc} w={3.4} o={0.9} />
      <AxisText $anchor="end" x="1394" y="969">800 K</AxisText>
      <AxisText $anchor="end" x="1394" y="1012">400 K</AxisText>
      <AxisText x="1792" y="942">80.0</AxisText>
      <AxisText x="1792" y="984">40.0</AxisText>
      <AxisText x="1792" y="1027">0.0</AxisText>
    </ChartSvg>
  );
}

function RightStoch() {
  return (
    <ChartSvg width="507" height="161" viewBox="1342 1056 507 161">
      <Bar $c="#2f2f30" x="1404" y="1137" width="379" height="16" />
      <Rule $c="#6a6c70" x1="1404" x2="1783" y1="1137" y2="1137" />
      <Rule $c="#6a6c70" x1="1404" x2="1783" y1="1153" y2="1153" />
      <Rule $c="#5d5f63" $dash="6 5" x1="1404" x2="1783" y1="1124.5" y2="1124.5" />
      <Rule $c="#e53935" x1="1404" x2="1783" y1="1091.5" y2="1091.5" />
      <Rule $c="#43a047" x1="1404" x2="1783" y1="1157.5" y2="1157.5" />
      {rightStoch.map((l, i) => <Curve key={i} $c={l.c} $w={1.1} points={toPts(Z11, l.s)} />)}
      <AxisText $anchor="end" x="1394" y="1090">80.00</AxisText>
      <AxisText $anchor="end" x="1394" y="1134">40.00</AxisText>
      <AxisText $anchor="end" x="1394" y="1178">0.00</AxisText>
      <AxisText x="1792" y="1089">80.00</AxisText>
      <AxisText x="1792" y="1125">60.00</AxisText>
      <AxisText x="1792" y="1161">40.00</AxisText>
      <AxisText $anchor="middle" x="1510" y="1204">May</AxisText>
      <AxisText $anchor="middle" x="1612" y="1204">Sep</AxisText>
      <AxisText $anchor="middle" $bold x="1720" y="1204">2025</AxisText>
      <RoundBadge x={1373.5} y={1204} t="Z" />
      <RoundBadge x={1817} y={1204} t="A" />
    </ChartSvg>
  );
}

function TvLogo() {
  return (
    <svg width="20" height="13" viewBox="0 0 36 26" aria-hidden="true">
      <path fill="#d1d4dc" d="M14 22H7V11H0V4h14v18zM28 22h-8l7.5-18h8L28 22z" />
      <circle fill="#d1d4dc" cx="20" cy="8" r="4" />
    </svg>
  );
}

export default function App() {
  return (
    <Page>
      <GlobalStyle />
      <Header>Tickmill published on TradingView.com, Jan 07, 2025 15:57 UTC</Header>
      <Charts>
        <Panel $w={1327}>
          <Pane $h={908}><LeftMain /></Pane>
          <Pane $h={121}><LeftVolume /></Pane>
          <Pane $h={161} $last><LeftStoch /></Pane>
        </Panel>
        <Panel $w={507}>
          <Pane $h={911}><RightMain /></Pane>
          <Pane $h={118}><RightVolume /></Pane>
          <Pane $h={161} $last><RightStoch /></Pane>
        </Panel>
      </Charts>
      <Footer><TvLogo />TradingView</Footer>
    </Page>
  );
}
